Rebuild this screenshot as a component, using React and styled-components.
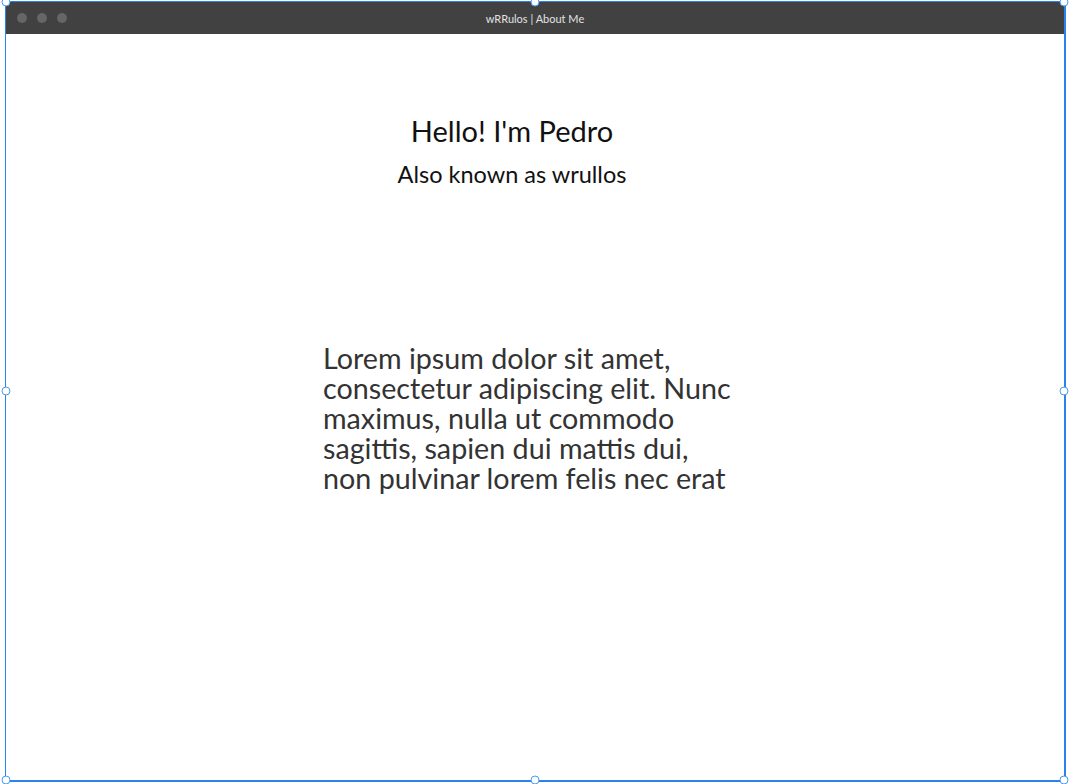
import React from 'react';
import styled, { createGlobalStyle } from 'styled-components';

const GlobalStyle = createGlobalStyle`
  html, body {
    margin: 0;
    padding: 0;
    background: #ffffff;
  }
  body {
    font-family: 'Lato', 'Liberation Sans', sans-serif;
  }
`;

const Stage = styled.div`
  width: 1070px;
  height: 784px;
  padding: 1px 4px 2px 5px;
  box-sizing: border-box;
  background: #ffffff;
`;

const Frame = styled.div`
  position: relative;
  height: 100%;
  box-sizing: border-box;
  border-style: solid;
  border-color: #2a83ec;
  border-width: 1px 2px 2px 1px;
  display: flex;
  flex-direction: column;
`;

const Handle = styled.span`
  position: absolute;
  width: 7px;
  height: 7px;
  border-radius: 50%;
  background: #ffffff;
  border: 1.5px solid #4a9af2;
  transform: translate(-50%, -50%);
  left: ${p => p.$x};
  top: ${p => p.$y};
  z-index: 2;
`;

const TitleBar = styled.div`
  height: 32px;
  flex: none;
  background: #414141;
  display: flex;
  align-items: center;
  position: relative;
  padding-left: 11px;
`;

const Lights = styled.div`
  display: flex;
  gap: 10px;
`;

const Light = styled.span`
  width: 10px;
  height: 10px;
  border-radius: 50%;
  background: #666666;
`;

const WindowTitle = styled.div`
  position: absolute;
  left: 0;
  right: 0;
  text-align: center;
  font-size: 11px;
  color: #e2e2e2;
  padding-top: 1px;
`;

const Content = styled.main`
  flex: 1;
  display: flex;
  flex-direction: column;
  align-items: center;
  padding-top: 80px;
`;

const Header = styled.header`
  display: flex;
  flex-direction: column;
  align-items: center;
  margin-right: 46px;
`;

const Heading = styled.h1`
  margin: 0;
  font-weight: 400;
  font-size: 29px;
  line-height: 34px;
  color: #111111;
`;

const Subheading = styled.h2`
  margin: 12px 0 0;
  font-weight: 400;
  font-size: 23.5px;
  line-height: 28px;
  color: #111111;
`;

const Paragraph = styled.p`
  margin: 155px 12px 0 0;
  width: 412px;
  font-size: 28.7px;
  line-height: 30px;
  color: #333333;
`;

export default function App() {
  return (
    <>
      <GlobalStyle />
      <Stage>
        <Frame>
          <Handle $x="0%" $y="0%" />
          <Handle $x="50%" $y="0%" />
          <Handle $x="100%" $y="0%" />
          <Handle $x="0%" $y="50%" />
          <Handle $x="100%" $y="50%" />
          <Handle $x="0%" $y="100%" />
          <Handle $x="50%" $y="100%" />
          <Handle $x="100%" $y="100%" />
          <TitleBar>
            <Lights>
              <Light />
              <Light />
              <Light />
            </Lights>
            <WindowTitle>wRRulos | About Me</WindowTitle>
          </TitleBar>
          <Content>
            <Header>
              <Heading>Hello! I'm Pedro</Heading>
              <Subheading>Also known as wrullos</Subheading>
            </Header>
            <Paragraph>
              Lorem ipsum dolor sit amet, consectetur adipiscing elit. Nunc maximus, nulla ut commodo sagittis, sapien dui mattis dui, non pulvinar lorem felis nec erat
            </Paragraph>
          </Content>
        </Frame>
      </Stage>
    </>
  );
}
